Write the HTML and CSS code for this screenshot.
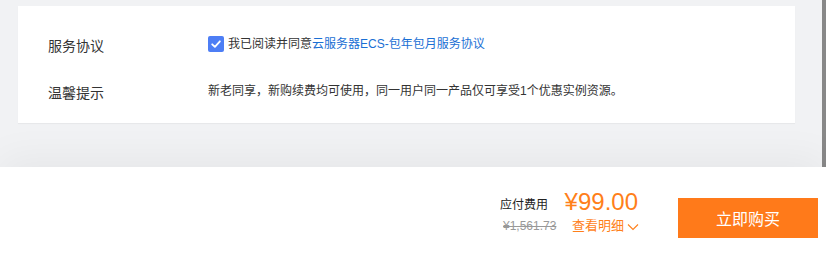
FILE: index.html
```html
<!DOCTYPE html>
<html lang="zh-CN">
<head>
<meta charset="utf-8">
<title>购买</title>
<link rel="stylesheet" href="styles.css">
</head>
<body>
<div class="main">
  <div class="content">
    <div class="card">
      <div class="row">
        <div class="label">服务协议</div>
        <div class="value">
          <span class="checkbox">
            <svg width="16" height="16" viewBox="0 0 16 16"><path d="M4.2 8.3 L6.9 10.9 L11.9 5.3" fill="none" stroke="#fff" stroke-width="1.8" stroke-linecap="round" stroke-linejoin="round"/></svg>
          </span>
          <span>我已阅读并同意</span><a class="link">云服务器ECS-包年包月服务协议</a>
        </div>
      </div>
      <div class="row">
        <div class="label">温馨提示</div>
        <div class="value">新老同享，新购续费均可使用，同一用户同一产品仅可享受1个优惠实例资源。</div>
      </div>
    </div>
  </div>
  <div class="scrollbar"></div>
</div>
<div class="footer">
  <div class="price">
    <span class="price-label">应付费用</span>
    <span class="price-now">¥99.00</span>
    <span class="price-old">¥1,561.73</span>
    <span class="detail">查看明细<svg width="12" height="8" viewBox="0 0 12 8"><polyline points="1,1.5 6,6.5 11,1.5" fill="none" stroke="#ff7f1a" stroke-width="1.1"/></svg></span>
  </div>
  <button class="buy">立即购买</button>
</div>
</body>
</html>
```
FILE: styles.css
```css
* { box-sizing: border-box; }
html, body { margin: 0; padding: 0; }
body {
  width: 826px;
  height: 260px;
  overflow: hidden;
  font-family: "Liberation Sans", "Noto Sans CJK SC", sans-serif;
  background: #f1f2f4;
  color: #333;
}
.main {
  display: flex;
  height: 167px;
}
.content {
  flex: 1;
  padding: 6px 27px 0 18px;
}
.scrollbar {
  width: 4px;
  background: #888;
}
.card {
  background: #fff;
  height: 117px;
  padding: 26px 30px 20px 30px;
  display: flex;
  flex-direction: column;
  gap: 23px;
  box-shadow: 0 1px 1px rgba(0,0,0,0.04);
}
.row {
  display: flex;
  align-items: center;
  height: 24px;
}
.label {
  width: 160px;
  font-size: 14px;
  line-height: 20px;
  padding-top: 3px;
  color: #333;
}
.value {
  display: flex;
  align-items: center;
  font-size: 12px;
  line-height: 18px;
  color: #333;
}
.checkbox {
  width: 16px;
  height: 16px;
  background: #4d7ef5;
  border-radius: 2px;
  margin-right: 4px;
  display: flex;
}
.link {
  color: #1a6fd4;
  cursor: pointer;
}
.footer {
  position: relative;
  height: 93px;
  background: #fff;
  display: flex;
  align-items: center;
  justify-content: flex-end;
  padding-right: 8px;
  box-shadow: 0 -8px 40px rgba(0,0,0,0.05);
}
.price {
  display: grid;
  grid-template-columns: 57px 75px;
  column-gap: 6px;
  margin-right: 40px;
  margin-top: -4px;
}
.price-label {
  font-size: 12px;
  color: #222;
  align-self: end;
  line-height: 20px;
  padding-bottom: 1px;
}
.price-now {
  font-size: 24px;
  line-height: 28px;
  color: #ff7f1a;
  justify-self: end;
}
.price-old {
  font-size: 12px;
  line-height: 20px;
  color: #999;
  text-decoration: line-through;
  padding-left: 3px;
}
.detail {
  justify-self: end;
  font-size: 13px;
  line-height: 20px;
  color: #ff7f1a;
  display: flex;
  align-items: center;
  gap: 3px;
  white-space: nowrap;
  margin-right: -1px;
}
.detail svg { margin-top: 2px; }
.buy {
  width: 140px;
  height: 40px;
  border: none;
  background: #ff7a1a;
  color: #fff;
  font-family: "Liberation Sans", "Noto Sans CJK SC", sans-serif;
  font-size: 16px;
  padding: 0;
  margin-top: 8px;
  cursor: pointer;
}
```
